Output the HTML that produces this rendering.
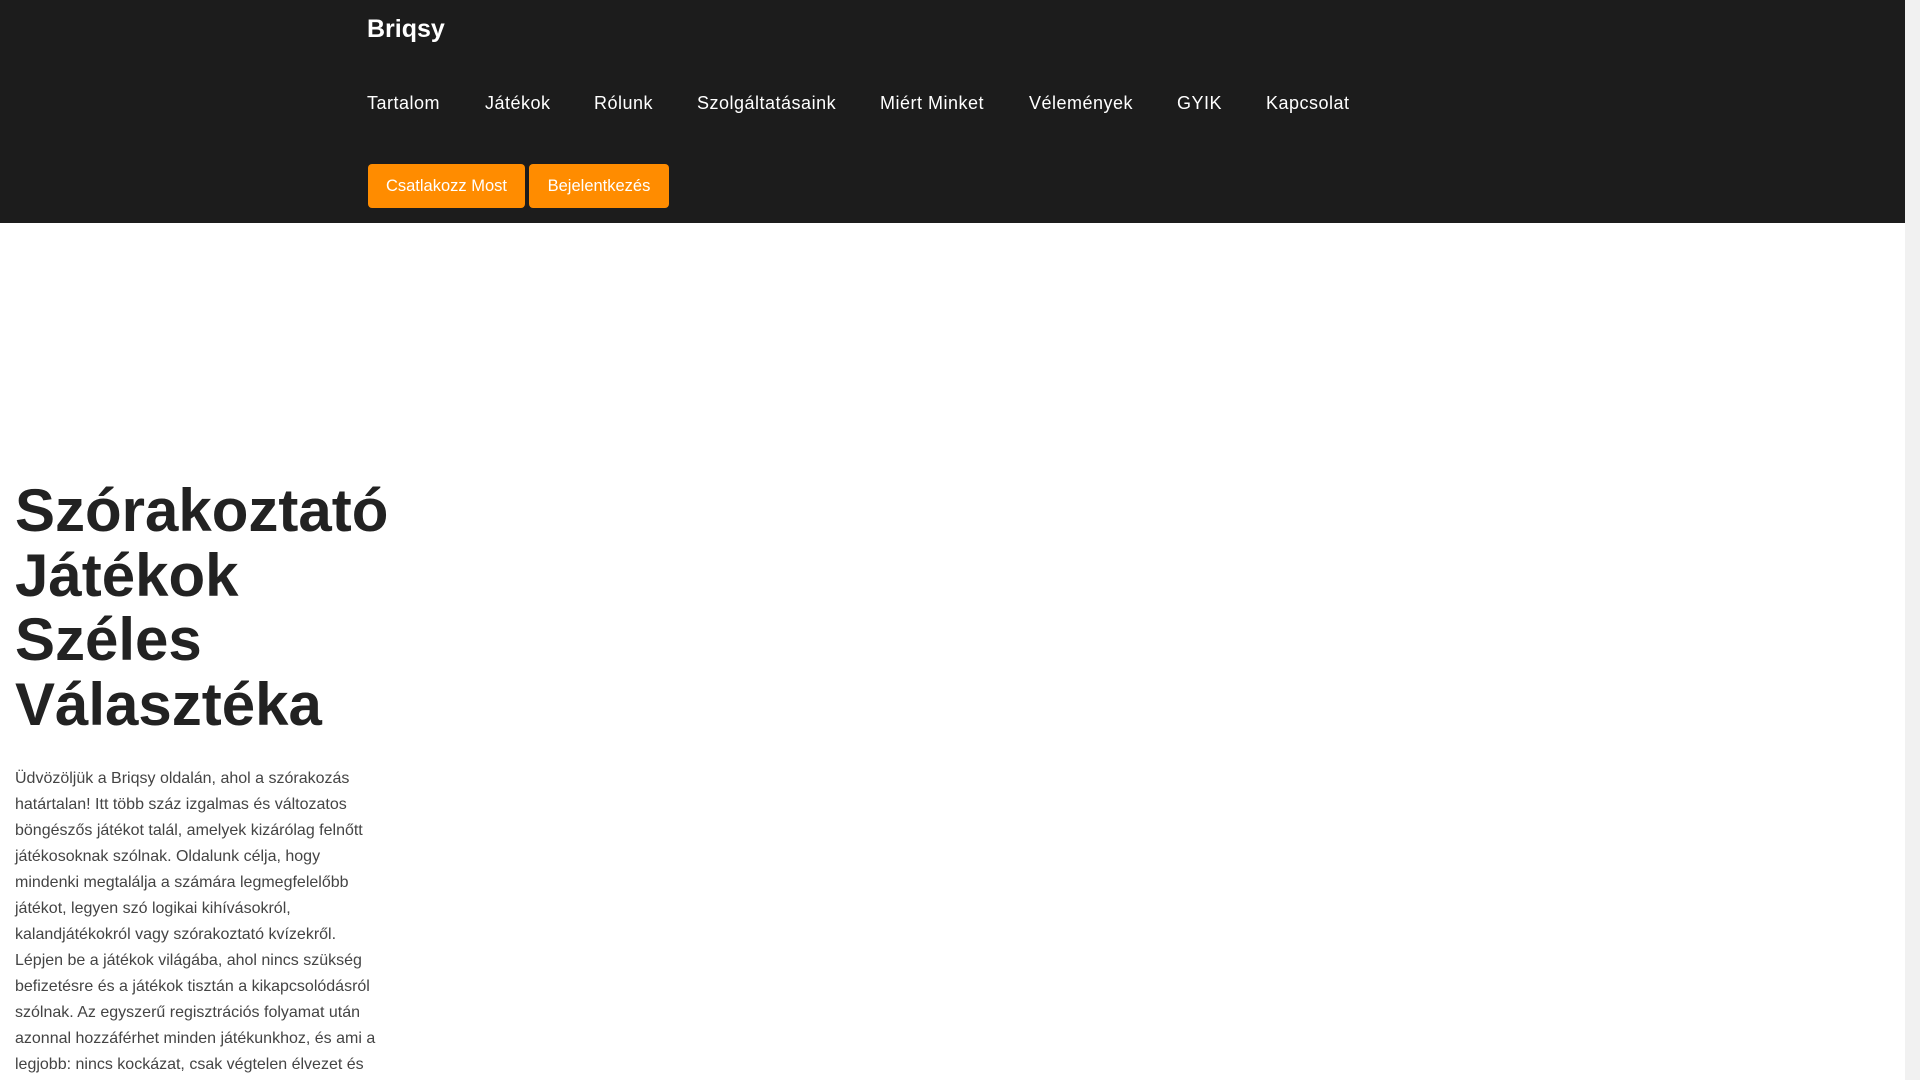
<!DOCTYPE html>
<html><head><meta charset="utf-8"><style>
html,body{margin:0;padding:0;}
body{width:1920px;height:1080px;overflow:hidden;background:#fff;font-family:"Liberation Sans",Arial,sans-serif;position:relative;}
.hdr{position:absolute;left:0;top:0;width:1905px;height:223px;background:#1c1c1c;}
.brand{position:absolute;left:367px;top:15px;font-size:25px;font-weight:bold;color:#fff;}
.nav a{position:absolute;top:93px;font-size:18px;letter-spacing:0.5px;color:#fff;text-decoration:none;}
.btn{position:absolute;top:164px;height:44px;line-height:44px;background:#ff8c00;color:#fff;font-size:16.5px;text-align:center;border-radius:4px;}
.sb{position:absolute;left:1905px;top:0;width:15px;height:1080px;background:#f1f1f1;}
.thumb{position:absolute;left:1907px;top:15px;width:11px;height:189px;background:#c1c1c1;}
.arr{position:absolute;left:1909px;top:6px;width:0;height:0;border-left:4px solid transparent;border-right:4px solid transparent;border-bottom:4px solid #a3a3a3;}
h1{position:absolute;left:15px;top:479px;margin:0;font-size:60px;line-height:64.5px;font-weight:bold;color:#222;width:400px;}
p{position:absolute;left:15px;top:766px;margin:0;width:372px;font-size:16px;line-height:26px;color:#444;}
</style></head><body>
<div class="hdr">
<div class="brand">Briqsy</div>
<div class="nav">
<a style="left:367px">Tartalom</a>
<a style="left:485px">Játékok</a>
<a style="left:594px">Rólunk</a>
<a style="left:697px">Szolgáltatásaink</a>
<a style="left:880px">Miért Minket</a>
<a style="left:1029px">Vélemények</a>
<a style="left:1177px">GYIK</a>
<a style="left:1266px">Kapcsolat</a>
</div>
<div class="btn" style="left:368px;width:157px">Csatlakozz Most</div>
<div class="btn" style="left:529px;width:140px">Bejelentkezés</div>
</div>
<div class="sb"><div class="arr"></div><div class="thumb"></div></div>
<h1>Szórakoztató Játékok Széles Választéka</h1>
<p>Üdvözöljük a Briqsy oldalán, ahol a szórakozás határtalan! Itt több száz izgalmas és változatos böngészős játékot talál, amelyek kizárólag felnőtt játékosoknak szólnak. Oldalunk célja, hogy mindenki megtalálja a számára legmegfelelőbb játékot, legyen szó logikai kihívásokról, kalandjátékokról vagy szórakoztató kvízekről. Lépjen be a játékok világába, ahol nincs szükség befizetésre és a játékok tisztán a kikapcsolódásról szólnak. Az egyszerű regisztrációs folyamat után azonnal hozzáférhet minden játékunkhoz, és ami a legjobb: nincs kockázat, csak végtelen élvezet és</p>
</body></html>
